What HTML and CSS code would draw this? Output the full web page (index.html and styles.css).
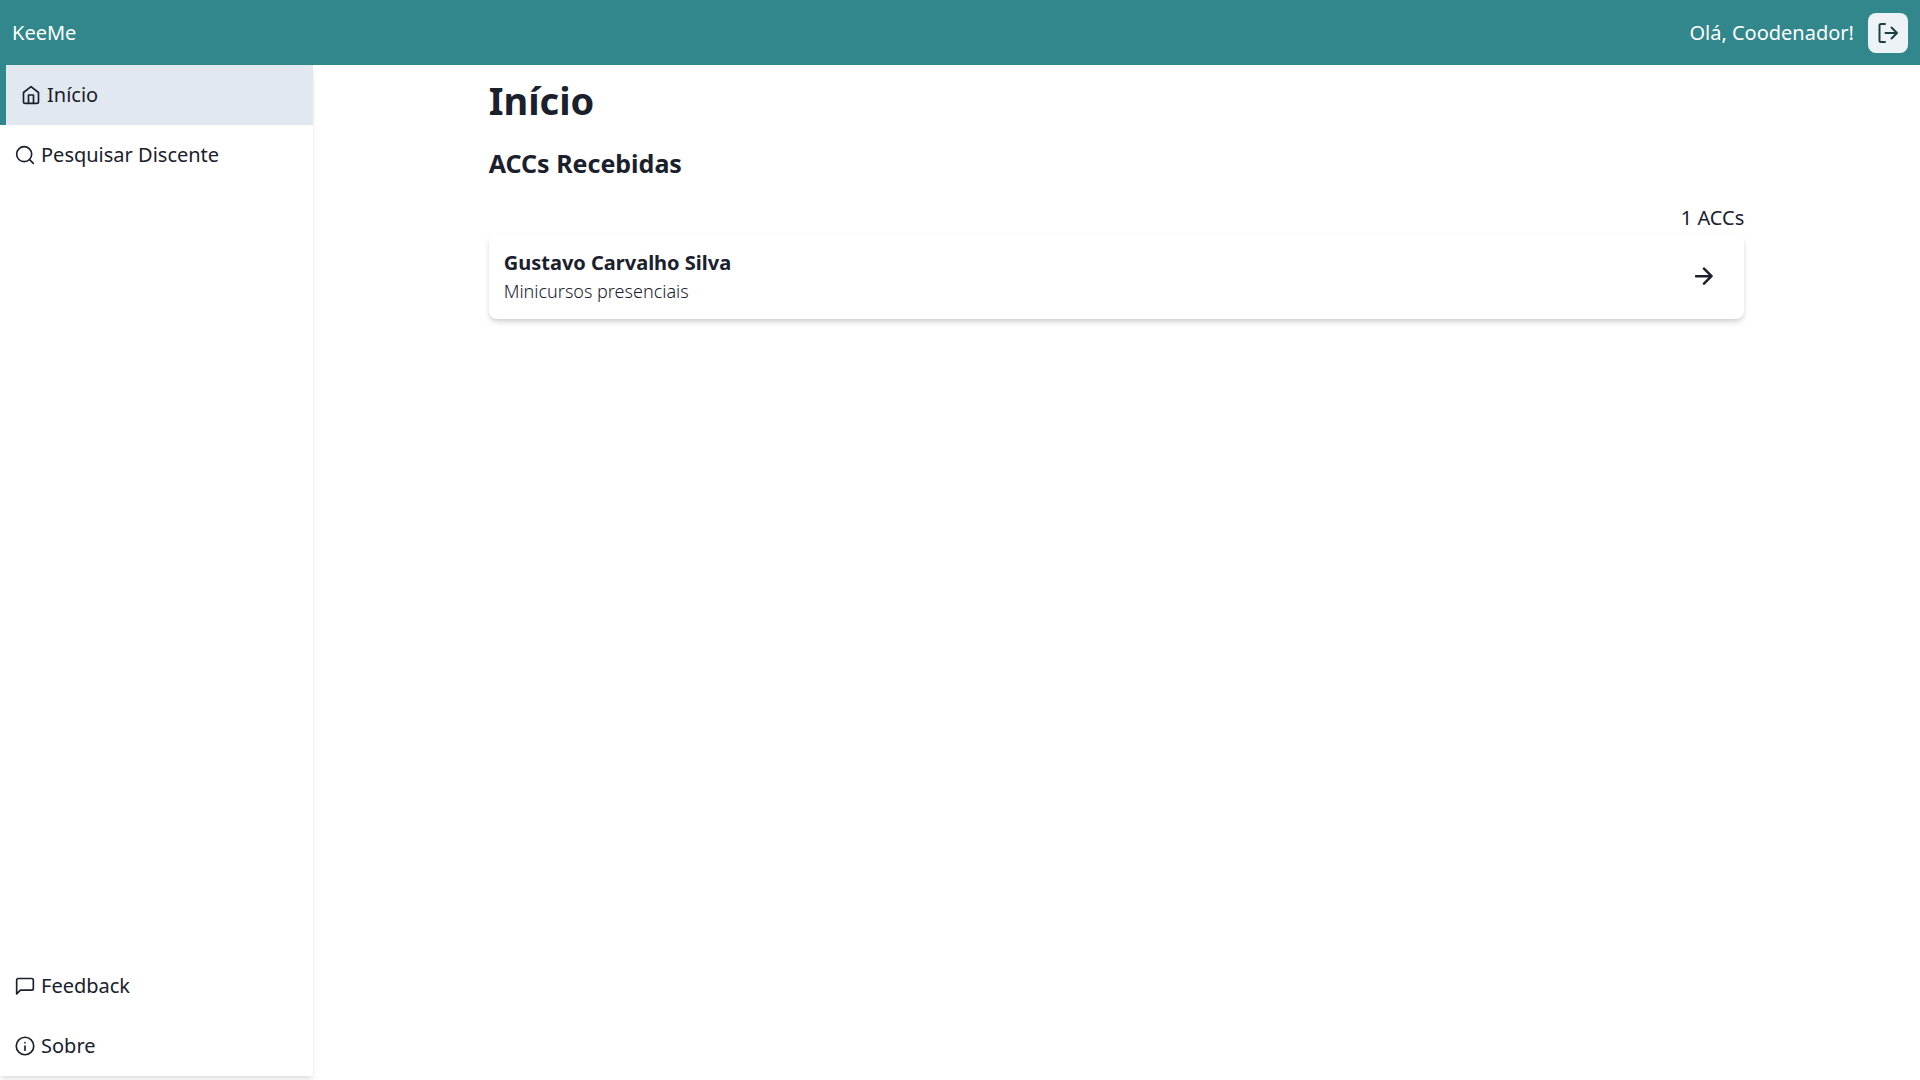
FILE: index.html
```html
<!DOCTYPE html>
<html lang="pt-BR">
<head>
  <meta charset="utf-8">
  <meta name="viewport" content="width=device-width, initial-scale=1">
  <title>KeeMe</title>
  <link rel="stylesheet" href="styles.css">
</head>
<body>
  <header class="topbar">
    <a class="brand" href="#">KeeMe</a>
    <div class="user">
      <span>Olá, Coodenador!</span>
      <button class="logout" type="button" aria-label="Sair">
        <svg class="icon icon-lg" viewBox="0 0 24 24"><path d="M9 3H5a1.500 1.500 0 0 0-1.500 1.500v15A1.500 1.500 0 0 0 5 21h4M9.500 12H21M15.500 6.500L21 12l-5.500 5.500"/></svg>
      </button>
    </div>
  </header>
  <div class="shell">
    <nav class="sidebar">
      <div class="group">
        <a class="item active" href="#">
          <svg class="icon" viewBox="0 0 24 24"><path d="M3 9l9-7 9 7v11a2 2 0 0 1-2 2H5a2 2 0 0 1-2-2z"/><path d="M9 22V12h6v10"/></svg>
          Início
        </a>
        <a class="item" href="#">
          <svg class="icon" viewBox="0 0 24 24"><circle cx="11" cy="11" r="9"/><path d="M22 22l-4.500-4.500"/></svg>
          Pesquisar Discente
        </a>
      </div>
      <div class="group">
        <a class="item" href="#">
          <svg class="icon" viewBox="0 0 24 24"><path d="M22 15a2 2 0 0 1-2 2H6.500L2 21.500V5a2 2 0 0 1 2-2h16a2 2 0 0 1 2 2z"/></svg>
          Feedback
        </a>
        <a class="item" href="#">
          <svg class="icon" viewBox="0 0 24 24"><circle cx="12" cy="12" r="10.500"/><path d="M12 17v-5M12 8v-.1"/></svg>
          Sobre
        </a>
      </div>
    </nav>
    <main class="content">
      <h1 class="title">Início</h1>
      <h2 class="subtitle">ACCs Recebidas</h2>
      <p class="count">1 ACCs</p>
      <a class="card" href="#">
        <div>
          <h3 class="name">Gustavo Carvalho Silva</h3>
          <p class="kind">Minicursos presenciais</p>
        </div>
        <svg class="icon arrow" viewBox="0 0 24 24"><path d="M2.500 11h18M12 2l9 9-9 9"/></svg>
      </a>
    </main>
  </div>
</body>
</html>
```
FILE: styles.css
```css
* {
  box-sizing: border-box;
  margin: 0;
}

body {
  display: flex;
  flex-direction: column;
  min-height: 100vh;
  background: #fff;
  color: #1a202c;
  font: 20px/30px "Noto Sans", sans-serif;
}

a {
  color: inherit;
  text-decoration: none;
}

.icon {
  width: 20px;
  height: 20px;
  flex: none;
  fill: none;
  stroke: currentColor;
  stroke-width: 2;
  stroke-linecap: round;
  stroke-linejoin: round;
}

.icon-lg {
  width: 24px;
  height: 24px;
}

.arrow {
  stroke-width: 3;
}

.topbar {
  display: flex;
  align-items: center;
  justify-content: space-between;
  height: 65px;
  padding: 0 12px;
  background: #31878b;
  color: #fff;
}

.user {
  display: flex;
  align-items: center;
  gap: 14px;
}

.logout {
  display: flex;
  align-items: center;
  justify-content: center;
  width: 40px;
  height: 40px;
  padding: 0;
  border: 0;
  border-radius: 8px;
  background: #edf2f7;
  color: #1d4044;
}

.shell {
  display: flex;
  flex: 1;
}

.sidebar {
  display: flex;
  flex-direction: column;
  justify-content: space-between;
  flex: none;
  width: 313px;
  margin-bottom: 4px;
  box-shadow: 0 4px 6px -1px rgba(0, 0, 0, 0.1), 0 2px 4px -1px rgba(0, 0, 0, 0.06);
}

.item {
  display: flex;
  align-items: center;
  gap: 6px;
  height: 60px;
  padding: 0 15px;
}

.active {
  border-left: 6px solid #31878b;
  background: #e2e8f0;
}

.content {
  width: calc((100% - 313px) * 0.8);
  margin: 0 auto;
  padding: 10px 15px;
}

.title {
  font-size: 38px;
  line-height: 50px;
}

.subtitle {
  margin-top: 21px;
  font-size: 25px;
  line-height: 34px;
}

.count {
  margin-top: 23px;
  text-align: right;
}

.card {
  display: flex;
  align-items: center;
  justify-content: space-between;
  padding: 15px 30px 14px 15px;
  border-radius: 8px;
  box-shadow: 0 4px 6px -1px rgba(0, 0, 0, 0.15), 0 2px 4px -1px rgba(0, 0, 0, 0.08);
}

.name {
  font-size: 20px;
  line-height: 30px;
}

.kind {
  font-size: 18px;
  font-weight: 350;
  line-height: 27px;
}
```
